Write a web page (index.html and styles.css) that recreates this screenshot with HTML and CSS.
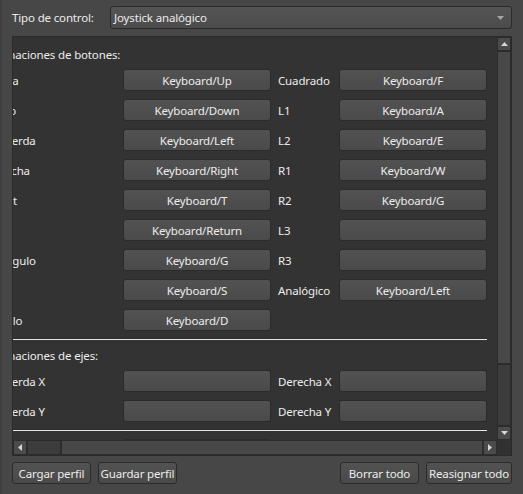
FILE: index.html
```html
<!DOCTYPE html>
<html lang="es">
<head>
<meta charset="utf-8">
<title>Controles</title>
<link rel="stylesheet" href="styles.css">
</head>
<body>
<div class="window">
  <div class="top">
    <span class="top-label">Tipo de control:</span>
    <div class="combo">
      <span class="combo-text">Joystick analógico</span>
      <svg class="combo-arrow" width="7" height="4" viewBox="0 0 7 4"><path d="M0 0H7L3.5 4Z" fill="#a4a4a4"/></svg>
    </div>
  </div>

  <div class="scrollarea">
    <div class="viewport">
      <div class="content">
        <div class="section-title">Asignaciones de botones:</div>
        <div class="grid">
          <span class="lbl">Arriba</span><div class="btn">Keyboard/Up</div><span class="lbl">Cuadrado</span><div class="btn">Keyboard/F</div>
          <span class="lbl">Abajo</span><div class="btn">Keyboard/Down</div><span class="lbl">L1</span><div class="btn">Keyboard/A</div>
          <span class="lbl">Izquierda</span><div class="btn">Keyboard/Left</div><span class="lbl">L2</span><div class="btn">Keyboard/E</div>
          <span class="lbl">Derecha</span><div class="btn">Keyboard/Right</div><span class="lbl">R1</span><div class="btn">Keyboard/W</div>
          <span class="lbl">Select</span><div class="btn">Keyboard/T</div><span class="lbl">R2</span><div class="btn">Keyboard/G</div>
          <span class="lbl">Start</span><div class="btn">Keyboard/Return</div><span class="lbl">L3</span><div class="btn"></div>
          <span class="lbl">Triángulo</span><div class="btn">Keyboard/G</div><span class="lbl">R3</span><div class="btn"></div>
          <span class="lbl">Cruz</span><div class="btn">Keyboard/S</div><span class="lbl">Analógico</span><div class="btn">Keyboard/Left</div>
          <span class="lbl">Círculo</span><div class="btn">Keyboard/D</div><span class="lbl"></span><span class="empty"></span>
        </div>
        <div class="sep"></div>
        <div class="section-title">Asignaciones de ejes:</div>
        <div class="grid">
          <span class="lbl">Izquierda X</span><div class="btn"></div><span class="lbl">Derecha X</span><div class="btn"></div>
          <span class="lbl">Izquierda Y</span><div class="btn"></div><span class="lbl">Derecha Y</span><div class="btn"></div>
        </div>
        <div class="sep"></div>
        <div class="grid">
          <span class="lbl">Vibración</span><div class="btn"></div><span class="lbl"></span><span class="empty"></span>
        </div>
      </div>
    </div>

    <div class="vscroll">
      <div class="sb-btn"><svg width="7" height="4" viewBox="0 0 7 4"><path d="M3.5 0L7 4H0Z" fill="#d6d6d6"/></svg></div>
      <div class="sb-handle v-handle"></div>
      <div class="sb-track"></div>
      <div class="sb-btn"><svg width="7" height="4" viewBox="0 0 7 4"><path d="M0 0H7L3.5 4Z" fill="#d6d6d6"/></svg></div>
    </div>

    <div class="hscroll">
      <div class="sb-btn"><svg width="4" height="7" viewBox="0 0 4 7"><path d="M4 0V7L0 3.5Z" fill="#d6d6d6"/></svg></div>
      <div class="sb-track h-track"></div>
      <div class="sb-handle h-handle"></div>
      <div class="sb-btn"><svg width="4" height="7" viewBox="0 0 4 7"><path d="M0 0V7L4 3.5Z" fill="#d6d6d6"/></svg></div>
    </div>

    <div class="corner"></div>
  </div>

  <div class="bottom">
    <div class="pbtn">Cargar perfil</div>
    <div class="pbtn">Guardar perfil</div>
    <div class="spacer"></div>
    <div class="pbtn">Borrar todo</div>
    <div class="pbtn wide">Reasignar todo</div>
  </div>
</div>
</body>
</html>
```

FILE: styles.css
```css
html, body {
  margin: 0;
  padding: 0;
}

body {
  width: 523px;
  height: 494px;
  overflow: hidden;
  background: #474747;
  font-family: "Noto Sans", "Open Sans", sans-serif;
  font-size: 11.5px;
  letter-spacing: -0.15px;
  color: #ececec;
}

.window {
  box-sizing: border-box;
  height: 494px;
  padding: 6px 11px 0 10px;
  display: flex;
  flex-direction: column;
  border-left: 2px solid #3f3f3f;
}

.top {
  display: flex;
  align-items: center;
  height: 23px;
}

.top-label {
  width: 98px;
  flex: none;
  line-height: 16px;
  padding-top: 1px;
}

.combo {
  flex: 1;
  height: 23px;
  box-sizing: border-box;
  border: 1px solid #2b2b2b;
  border-radius: 3px;
  background: linear-gradient(#545454, #4b4b4b);
  display: flex;
  align-items: center;
  padding-left: 3px;
}

.combo-text {
  line-height: 16px;
  padding-top: 1px;
}

.combo-arrow {
  margin-left: auto;
  margin-right: 7px;
}

.scrollarea {
  margin-top: 7px;
  height: 420px;
  box-sizing: border-box;
  border: 1px solid #2a2a2a;
  background: #333333;
  display: grid;
  grid-template-columns: 1fr 14px;
  grid-template-rows: 1fr 15px;
}

.viewport {
  overflow: hidden;
  min-width: 0;
  min-height: 0;
}

.content {
  margin-left: -27px;
  padding-top: 10px;
  width: 501px;
}

.section-title {
  height: 16px;
  line-height: 16px;
  margin-bottom: 6px;
  white-space: nowrap;
}

.grid {
  display: grid;
  grid-template-columns: 130px 148px 54px 148px;
  grid-auto-rows: 22px;
  column-gap: 7px;
  row-gap: 8px;
}

.lbl {
  display: flex;
  align-items: center;
  white-space: nowrap;
}

.btn {
  box-sizing: border-box;
  border: 1px solid #2b2b2b;
  border-radius: 3px;
  background: linear-gradient(#525252, #4a4a4a);
  display: flex;
  align-items: center;
  justify-content: center;
  white-space: nowrap;
}

.sep {
  height: 1px;
  border-top: 1px solid #2c2c2c;
  background: #e6e6e6;
  margin: 7px 0 8px;
}

.vscroll {
  display: flex;
  flex-direction: column;
  background: #3d3d3d;
}

.hscroll {
  display: flex;
  background: #3d3d3d;
}

.sb-btn {
  flex: none;
  width: 14px;
  height: 14px;
  box-sizing: border-box;
  border: 1px solid #2c2c2c;
  background: #4b4b4b;
  display: flex;
  align-items: center;
  justify-content: center;
}

.hscroll .sb-btn {
  height: 15px;
}

.sb-handle {
  box-sizing: border-box;
  border: 1px solid #2c2c2c;
  background: #484848;
}

.sb-track {
  flex: 1;
  box-sizing: border-box;
  border: 1px solid #2c2c2c;
  background: #3c3c3c;
}

.v-handle {
  height: 313px;
  flex: none;
}

.h-track {
  flex: none;
  width: 34px;
}

.h-handle {
  flex: 1;
}

.corner {
  background: #313131;
}

.bottom {
  display: flex;
  gap: 7px;
  margin-top: 6px;
}

.spacer {
  flex: 1;
}

.pbtn {
  box-sizing: border-box;
  width: 79px;
  height: 22px;
  border: 1px solid #2b2b2b;
  border-radius: 3px;
  background: linear-gradient(#525252, #4a4a4a);
  display: flex;
  align-items: center;
  justify-content: center;
  white-space: nowrap;
}

.pbtn.wide {
  width: 86px;
}
```
